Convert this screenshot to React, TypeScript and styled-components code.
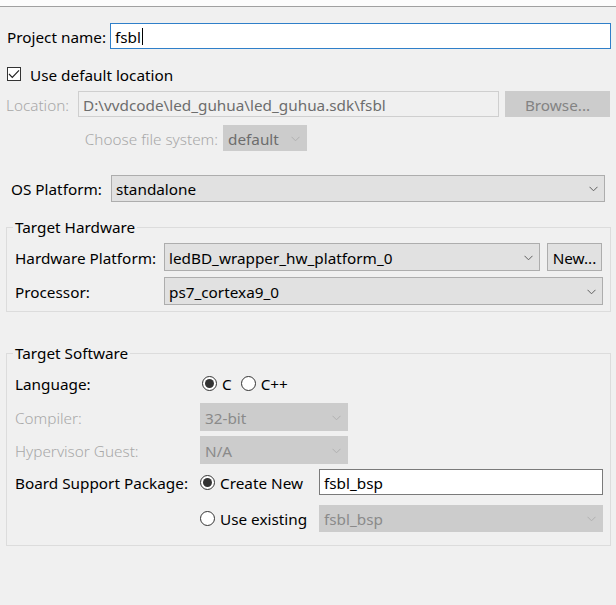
import React from "react";
import styled, { createGlobalStyle } from "styled-components";

const GlobalStyle = createGlobalStyle`
  html, body { margin: 0; padding: 0; background: #f0f0f0; }
  body {
    font-family: "Noto Sans", "Segoe UI", "Noto Sans CJK SC", sans-serif;
    font-size: 15.3px;
    color: #000;
    width: 616px;
    height: 605px;
    overflow: hidden;
  }
  * { box-sizing: border-box; }
`;

const TopStrip = styled.div`
  height: 7px;
  background: #fcfcfc;
  border-bottom: 1px solid #a0a0a0;
`;

const Row = styled.div<{ $pl?: number; $mt: number; $h: number }>`
  display: flex;
  align-items: center;
  padding-left: ${(p) => p.$pl ?? 0}px;
  margin-top: ${(p) => p.$mt}px;
  height: ${(p) => p.$h}px;
  white-space: nowrap;
`;

const Label = styled.span<{ $w?: number; $disabled?: boolean; $right?: boolean }>`
  flex: none;
  width: ${(p) => (p.$w ? `${p.$w}px` : "auto")};
  color: ${(p) => (p.$disabled ? "#a8a8a8" : "#000")};
  font-weight: ${(p) => (p.$disabled ? 300 : 400)};
  text-align: ${(p) => (p.$right ? "right" : "left")};
  padding-right: ${(p) => (p.$right ? "5px" : "0")};
  line-height: 20px;
  padding-top: 1px;
`;

const TextBox = styled.div<{ $w: number; $variant: "focus" | "normal" | "disabled" }>`
  flex: none;
  width: ${(p) => p.$w}px;
  height: 100%;
  display: flex;
  align-items: center;
  padding: 1px 0 0 4px;
  border: 1px solid
    ${(p) => (p.$variant === "focus" ? "#2f7fc9" : p.$variant === "normal" ? "#7a7a7a" : "#cfcfcf")};
  background: ${(p) => (p.$variant === "disabled" ? "#f0f0f0" : "#fff")};
  color: ${(p) => (p.$variant === "disabled" ? "#6d6d6d" : "#000")};
`;

const Caret = styled.span`
  display: inline-block;
  width: 1px;
  height: 17px;
  background: #000;
  margin-left: 1px;
`;

const ComboBox = styled.div<{ $w: number; $disabled?: boolean; $strong?: boolean }>`
  flex: none;
  width: ${(p) => p.$w}px;
  height: 100%;
  display: flex;
  align-items: center;
  justify-content: space-between;
  padding: 1px 6px 0 4px;
  border: 1px solid ${(p) => (p.$disabled ? "#cccccc" : "#adadad")};
  background: ${(p) => (p.$disabled ? "#cccccc" : "#e1e1e1")};
  color: ${(p) => (p.$disabled ? (p.$strong ? "#6d6d6d" : "#8a8a8a") : "#000")};
`;

const Chevron = ({ disabled }: { disabled?: boolean }) => (
  <svg width="9" height="6" viewBox="0 0 9 6" style={{ flex: "none" }}>
    <path d="M0.5 0.8 L4.5 4.8 L8.5 0.8" fill="none" stroke={disabled ? "#b0b0b0" : "#606060"} strokeWidth="1" />
  </svg>
);

const PushButton = styled.div<{ $w: number; $disabled?: boolean; $ml: number }>`
  flex: none;
  width: ${(p) => p.$w}px;
  margin-left: ${(p) => p.$ml}px;
  height: 100%;
  display: flex;
  align-items: center;
  justify-content: center;
  padding-top: 1px;
  border: 1px solid ${(p) => (p.$disabled ? "#cccccc" : "#adadad")};
  background: ${(p) => (p.$disabled ? "#cccccc" : "#e1e1e1")};
  color: ${(p) => (p.$disabled ? "#838383" : "#000")};
`;

const CheckBox = styled.span`
  flex: none;
  width: 14px;
  height: 14px;
  border: 1px solid #333;
  background: #fff;
  display: flex;
  align-items: center;
  justify-content: center;
  margin-right: 9px;
`;

const Radio = styled.span<{ $on?: boolean; $ml?: number }>`
  flex: none;
  width: 15px;
  height: 15px;
  border-radius: 50%;
  border: 1px solid #333;
  background: #fff;
  display: flex;
  align-items: center;
  justify-content: center;
  margin-left: ${(p) => p.$ml ?? 0}px;
  margin-right: 5px;
  &::after {
    content: "";
    display: ${(p) => (p.$on ? "block" : "none")};
    width: 9px;
    height: 9px;
    border-radius: 50%;
    background: #333;
  }
`;

const RadioGroup = styled.div<{ $w?: number }>`
  flex: none;
  display: flex;
  align-items: center;
  width: ${(p) => (p.$w ? `${p.$w}px` : "auto")};
`;

const RadioText = styled.span`
  line-height: 20px;
  padding-top: 1px;
`;

const Group = styled.fieldset<{ $mt: number; $pb: number }>`
  margin: ${(p) => p.$mt}px 5px 0 6px;
  padding: 0 0 ${(p) => p.$pb}px 8px;
  border: 1px solid #dcdcdc;
  min-width: 0;
`;

const Legend = styled.legend`
  padding: 1px 2px 0;
  margin-left: -2px;
  line-height: 19px;
  height: 20px;
`;

export default function App() {
  return (
    <>
      <GlobalStyle />
      <TopStrip />

      <Row $pl={7} $mt={16} $h={26}>
        <Label $w={103}>Project name:</Label>
        <TextBox $w={501} $variant="focus">
          fsbl
          <Caret />
        </TextBox>
      </Row>

      <Row $pl={7} $mt={17} $h={16}>
        <CheckBox>
          <svg width="12" height="10" viewBox="0 0 12 10">
            <path d="M1 5 L4.3 8.3 L11 1.3" fill="none" stroke="#222" strokeWidth="1.2" />
          </svg>
        </CheckBox>
        <Label>Use default location</Label>
      </Row>

      <Row $pl={6} $mt={9} $h={26}>
        <Label $w={72} $disabled>
          Location:
        </Label>
        <TextBox $w={421} $variant="disabled">
          D:\vvdcode\led_guhua\led_guhua.sdk\fsbl
        </TextBox>
        <PushButton $w={105} $ml={6} $disabled>
          Browse...
        </PushButton>
      </Row>

      <Row $pl={78} $mt={8} $h={26}>
        <Label $w={145} $disabled $right>
          Choose file system:
        </Label>
        <ComboBox $w={84} $disabled $strong>
          default
          <Chevron disabled />
        </ComboBox>
      </Row>

      <Row $pl={11} $mt={24} $h={27}>
        <Label $w={100}>OS Platform:</Label>
        <ComboBox $w={494}>
          standalone
          <Chevron />
        </ComboBox>
      </Row>

      <Group $mt={15} $pb={6}>
        <Legend>Target Hardware</Legend>
        <Row $mt={6} $h={28}>
          <Label $w={149}>Hardware Platform:</Label>
          <ComboBox $w={376}>
            ledBD_wrapper_hw_platform_0
            <Chevron />
          </ComboBox>
          <PushButton $w={55} $ml={7}>
            New...
          </PushButton>
        </Row>
        <Row $mt={6} $h={28}>
          <Label $w={149}>Processor:</Label>
          <ComboBox $w={439}>
            ps7_cortexa9_0
            <Chevron />
          </ComboBox>
        </Row>
      </Group>

      <Group $mt={31} $pb={13}>
        <Legend>Target Software</Legend>
        <Row $mt={10} $h={20}>
          <Label $w={185}>Language:</Label>
          <RadioGroup>
            <Radio $on $ml={2} />
            <RadioText>C</RadioText>
            <Radio $ml={9} />
            <RadioText>C++</RadioText>
          </RadioGroup>
        </Row>
        <Row $mt={10} $h={28}>
          <Label $w={185} $disabled>
            Compiler:
          </Label>
          <ComboBox $w={148} $disabled>
            32-bit
            <Chevron disabled />
          </ComboBox>
        </Row>
        <Row $mt={5} $h={28}>
          <Label $w={185} $disabled>
            Hypervisor Guest:
          </Label>
          <ComboBox $w={148} $disabled>
            N/A
            <Chevron disabled />
          </ComboBox>
        </Row>
        <Row $mt={5} $h={26}>
          <Label $w={185}>Board Support Package:</Label>
          <RadioGroup $w={119}>
            <Radio $on />
            <RadioText>Create New</RadioText>
          </RadioGroup>
          <TextBox $w={284} $variant="normal">
            fsbl_bsp
          </TextBox>
        </Row>
        <Row $mt={10} $h={27}>
          <Label $w={185} />
          <RadioGroup $w={119}>
            <Radio />
            <RadioText>Use existing</RadioText>
          </RadioGroup>
          <ComboBox $w={284} $disabled>
            fsbl_bsp
            <Chevron disabled />
          </ComboBox>
        </Row>
      </Group>
    </>
  );
}
